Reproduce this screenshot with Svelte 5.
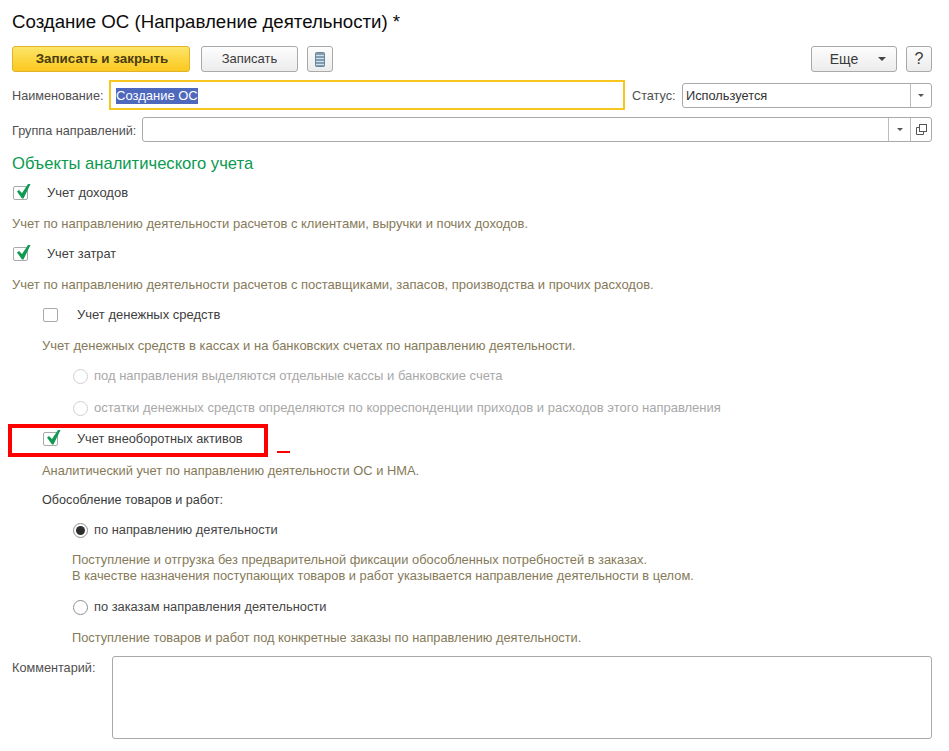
<script>
  const text = 'Создание ОС';
</script>

<div class="page">
  <h1>Создание ОС (Направление деятельности) *</h1>

  <div class="toolbar">
    <button class="btn primary">Записать и закрыть</button>
    <button class="btn save">Записать</button>
    <button class="btn icon" aria-label="Список">
      <svg width="10" height="15" viewBox="0 0 10 15">
        <rect x="0.5" y="0.5" width="9" height="14" rx="1" fill="#7f9db3" stroke="#6d8597" />
        <path d="M1 3.500h8M1 6.500h8M1 9.500h8M1 12.500h8" stroke="#d5e1ea" stroke-width="1" />
      </svg>
    </button>
    <span class="spacer"></span>
    <button class="btn more">Еще <i class="arrow"></i></button>
    <button class="btn help">?</button>
  </div>

  <div class="name-row">
    <span class="label name-label">Наименование:</span>
    <div class="name-field"><span class="selected">{text}</span></div>
    <span class="label status-label">Статус:</span>
    <div class="input status">
      <span class="value">Используется</span>
      <span class="drop last"><i class="arrow small"></i></span>
    </div>
  </div>

  <div class="group-row">
    <span class="label group-label">Группа направлений:</span>
    <div class="input group">
      <span class="value"></span>
      <span class="drop"><i class="arrow small"></i></span>
      <span class="drop last">
        <svg width="11" height="11" viewBox="0 0 11 11" fill="none" stroke="#555">
          <path d="M3.500 3.500h-3v7h7v-3" />
          <rect x="3.500" y="0.500" width="7" height="7" fill="#fff" />
        </svg>
      </span>
    </div>
  </div>

  <h2>Объекты аналитического учета</h2>

  <div class="row check first">
    <span class="box"><svg class="tick" viewBox="0 0 14 15"><path d="M0 7.500L2 6l3 3 6-9h2.500L6.500 14.500H5z" /></svg></span>
    <span class="cap">Учет доходов</span>
  </div>
  <p class="desc wide">Учет по направлению деятельности расчетов с клиентами, выручки и почих доходов.</p>
  <div class="row check">
    <span class="box"><svg class="tick" viewBox="0 0 14 15"><path d="M0 7.500L2 6l3 3 6-9h2.500L6.500 14.500H5z" /></svg></span>
    <span class="cap narrow">Учет затрат</span>
  </div>
  <p class="desc wide">Учет по направлению деятельности расчетов с поставщиками, запасов, производства и прочих расходов.</p>

  <div class="nested">
    <div class="row check">
      <span class="box"></span>
      <span class="cap">Учет денежных средств</span>
    </div>
    <p class="desc wide">Учет денежных средств в кассах и на банковских счетах по направлению деятельности.</p>

    <div class="row radio off">
      <span class="dot"></span>
      <span>под направления выделяются отдельные кассы и банковские счета</span>
    </div>
    <div class="row radio off spaced">
      <span class="dot"></span>
      <span>остатки денежных средств определяются по корреспонденции приходов и расходов этого направления</span>
    </div>

    <div class="row check flagged">
      <span class="box"><svg class="tick" viewBox="0 0 14 15"><path d="M0 7.500L2 6l3 3 6-9h2.500L6.500 14.500H5z" /></svg></span>
      <span class="cap narrow">Учет внеоборотных активов</span>
      <span class="redbox"></span>
      <span class="reddash"></span>
    </div>
    <p class="desc tight">Аналитический учет по направлению деятельности ОС и НМА.</p>
    <p class="plain">Обособление товаров и работ:</p>

    <div class="sub">
      <div class="row radio on">
        <span class="dot"></span>
        <span>по направлению деятельности</span>
      </div>
      <p class="desc two">Поступление и отгрузка без предварительной фиксации обособленных потребностей в заказах.<br />В качестве назначения поступающих товаров и работ указывается направление деятельности в целом.</p>
      <div class="row radio after-two">
        <span class="dot"></span>
        <span>по заказам направления деятельности</span>
      </div>
      <p class="desc wide">Поступление товаров и работ под конкретные заказы по направлению деятельности.</p>
    </div>
  </div>

  <div class="comment-row">
    <span class="label comment-label">Комментарий:</span>
    <div class="input comment"></div>
  </div>
</div>

<style>
  :global(body) {
    background: #fff;
  }
  .page {
    width: 949px;
    height: 751px;
    box-sizing: border-box;
    padding: 12px 17px 0 12px;
    overflow: hidden;
    font: 13px/20px "Liberation Sans", Arial, sans-serif;
    color: #4b4b4b;
    background: #fff;
  }
  h1 {
    margin: 0;
    height: 20px;
    font-weight: 400;
    font-size: 18.67px;
    line-height: 20px;
    color: #0c0c0c;
    white-space: nowrap;
  }
  .toolbar {
    display: flex;
    margin-top: 14px;
    height: 26px;
  }
  .btn {
    box-sizing: border-box;
    height: 26px;
    padding: 0;
    border: 1px solid #a9a9a9;
    border-radius: 3px;
    background: linear-gradient(#fdfdfd, #ececec);
    font: inherit;
    color: #3a3a3a;
    display: flex;
    align-items: center;
    justify-content: center;
  }
  .primary {
    width: 178px;
    padding-left: 2px;
    border-color: #e0b32a;
    background: linear-gradient(#fde568, #fbc81e);
    font-weight: 700;
    font-size: 13.4px;
    color: #4a3c10;
  }
  .save {
    width: 97px;
    margin-left: 11px;
  }
  .icon {
    width: 26px;
    margin-left: 9px;
  }
  .spacer {
    flex: 1;
  }
  .more {
    width: 86px;
    gap: 20px;
    padding-left: 8px;
    font-size: 14px;
  }
  .help {
    width: 26px;
    margin-left: 9px;
    font-size: 16px;
  }
  .arrow {
    display: block;
    width: 0;
    height: 0;
    border: 4px solid transparent;
    border-top: 4px solid #444;
    border-bottom: 0;
  }
  .arrow.small {
    border-width: 3px;
    border-bottom: 0;
    border-top-color: #555;
  }
  .name-row {
    display: flex;
    align-items: center;
    margin-top: 8px;
    height: 30px;
  }
  .label {
    padding-top: 2px;
    font-size: 12.7px;
    color: #4f4f4f;
    white-space: nowrap;
  }
  .name-label {
    width: 97px;
  }
  .name-field {
    box-sizing: border-box;
    width: 516px;
    height: 30px;
    border: 2px solid #f6c51e;
    padding: 1px 5px 0;
    display: flex;
    align-items: center;
  }
  .selected {
    background: #4e68bd;
    color: #fff;
    font-size: 13px;
    line-height: 16px;
  }
  .status-label {
    width: 50px;
    margin-left: 7px;
  }
  .input {
    box-sizing: border-box;
    display: flex;
    border: 1px solid #a9a9a9;
    border-radius: 3px;
    background: #fff;
  }
  .status {
    width: 250px;
    height: 25px;
  }
  .value {
    flex: 1;
    padding-left: 3px;
    font-size: 12.8px;
    line-height: 23px;
    color: #333;
  }
  .drop {
    width: 21px;
    border-left: 1px solid #bdbdbd;
    display: flex;
    align-items: center;
    justify-content: center;
  }
  .drop.last {
    width: 20px;
  }
  .group-row {
    display: flex;
    align-items: center;
    margin-top: 7px;
    height: 25px;
  }
  .group-label {
    width: 130px;
  }
  .group {
    width: 790px;
    height: 25px;
  }
  h2 {
    margin: 12px 0 0;
    height: 20px;
    font-weight: 400;
    font-size: 16.6px;
    line-height: 20px;
    color: #0a9a50;
    white-space: nowrap;
  }
  .row {
    display: flex;
    align-items: center;
    height: 20px;
    margin-top: 10px;
    white-space: nowrap;
  }
  .first {
    margin-top: 9px;
  }
  .box {
    box-sizing: border-box;
    flex: none;
    position: relative;
    width: 15px;
    height: 14px;
    margin-left: 1px;
    border: 1px solid #a9a9a9;
    border-radius: 2px;
    background: #fff;
  }
  .tick {
    position: absolute;
    left: 2.5px;
    top: -3px;
    width: 14px;
    height: 15px;
    overflow: visible;
  }
  .tick path {
    fill: #0f9a52;
  }
  .cap {
    margin-left: 19px;
    color: #404040;
  }
  .narrow {
    font-size: 12.77px;
  }
  .desc {
    margin: 0;
    color: #857a58;
    white-space: nowrap;
  }
  .wide {
    margin-top: 11px;
  }
  .tight {
    margin-top: 12px;
    font-size: 12.86px;
  }
  .nested {
    padding-left: 30px;
  }
  .radio {
    gap: 6px;
    padding-left: 31px;
    font-size: 12.85px;
    color: #454545;
  }
  .sub .desc {
    margin-left: 30px;
    font-size: 12.8px;
  }
  .sub .two {
    margin-top: 12px;
    font-size: 12.85px;
    line-height: 16px;
  }
  .dot {
    box-sizing: border-box;
    flex: none;
    width: 15px;
    height: 15px;
    border: 1px solid #8f8f8f;
    border-radius: 50%;
    background: #fff;
    position: relative;
  }
  .on .dot::after {
    content: "";
    position: absolute;
    inset: 2px;
    border-radius: 50%;
    background: #2e2e2e;
  }
  .off {
    font-size: 13px;
    color: #a8a8a8;
  }
  .off .dot {
    border-color: #d0d0d0;
  }
  .spaced {
    margin-top: 12px;
  }
  .flagged {
    position: relative;
    margin-top: 11px;
  }
  .redbox {
    position: absolute;
    left: -34px;
    top: -5px;
    width: 260px;
    height: 33px;
    box-sizing: border-box;
    border: 4px solid #f00;
  }
  .reddash {
    position: absolute;
    left: 235px;
    top: 22px;
    width: 13px;
    height: 2px;
    background: #f00;
  }
  .plain {
    margin: 9px 0 0;
    font-size: 12.6px;
    color: #3a3a3a;
  }
  .after-two {
    margin-top: 13px;
  }
  .comment-row {
    display: flex;
    margin-top: 8px;
  }
  .comment-label {
    width: 100px;
    line-height: 20px;
  }
  .comment {
    width: 820px;
    height: 83px;
  }
</style>
